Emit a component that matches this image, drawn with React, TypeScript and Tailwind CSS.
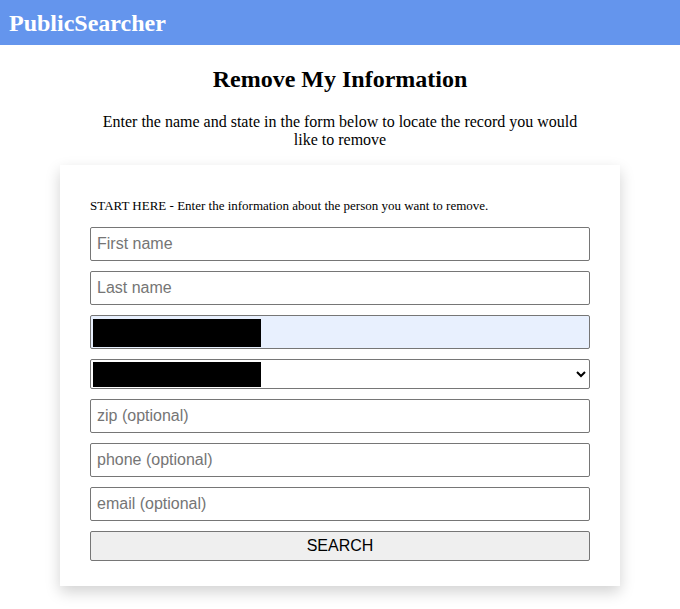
export default function App() {
  const fieldBase =
    "h-[34px] w-full rounded-[2px] border border-[#767676] px-[6px] text-[16px] text-black placeholder:text-[#757575] outline-none";

  return (
    <div className="min-h-[609px] bg-white" style={{ fontFamily: '"Liberation Serif", serif' }}>
      <header className="flex h-[45px] items-center bg-[#6495ed] px-[9px]">
        <span className="text-[24px] font-bold leading-none text-white">PublicSearcher</span>
      </header>

      <main className="flex flex-col items-center">
        <h1 className="mt-[21px] text-[24px] font-bold leading-[26px] text-black">Remove My Information</h1>
        <p className="mt-[21px] w-[500px] text-center text-[16px] leading-[18px] text-black">
          Enter the name and state in the form below to locate the record you would like to remove
        </p>

        <div className="mt-[16px] w-[560px] bg-white px-[30px] pb-[25px] pt-[33px] shadow-[0_6px_14px_rgba(0,0,0,0.18)]">
          <p className="mb-[13px] text-[13px] leading-[16px] text-black">
            START HERE - Enter the information about the person you want to remove.
          </p>
          <form
            className="flex flex-col gap-[10px]"
            style={{ fontFamily: '"Liberation Sans", Arial, sans-serif' }}
            onSubmit={(e) => e.preventDefault()}
          >
            <input className={`${fieldBase} bg-white`} placeholder="First name" />
            <input className={`${fieldBase} bg-white`} placeholder="Last name" />
            <div className="relative">
              <input className={`${fieldBase} bg-[#e8f0fe]`} />
              <div className="absolute left-[3px] top-[4px] h-[28px] w-[168px] bg-black" />
            </div>
            <div className="relative">
              <select className="h-[30px] w-full rounded-[2px] border border-[#767676] bg-white px-[4px] text-[16px] text-black outline-none">
                <option></option>
              </select>
              <div className="absolute left-[3px] top-[3px] h-[25px] w-[168px] bg-black" />
            </div>
            <input className={`${fieldBase} bg-white`} placeholder="zip (optional)" />
            <input className={`${fieldBase} bg-white`} placeholder="phone (optional)" />
            <input className={`${fieldBase} bg-white`} placeholder="email (optional)" />
            <button
              type="submit"
              className="h-[30px] w-full rounded-[2px] border border-[#767676] bg-[#efefef] text-[16px] text-black"
            >
              SEARCH
            </button>
          </form>
        </div>
      </main>
    </div>
  );
}
